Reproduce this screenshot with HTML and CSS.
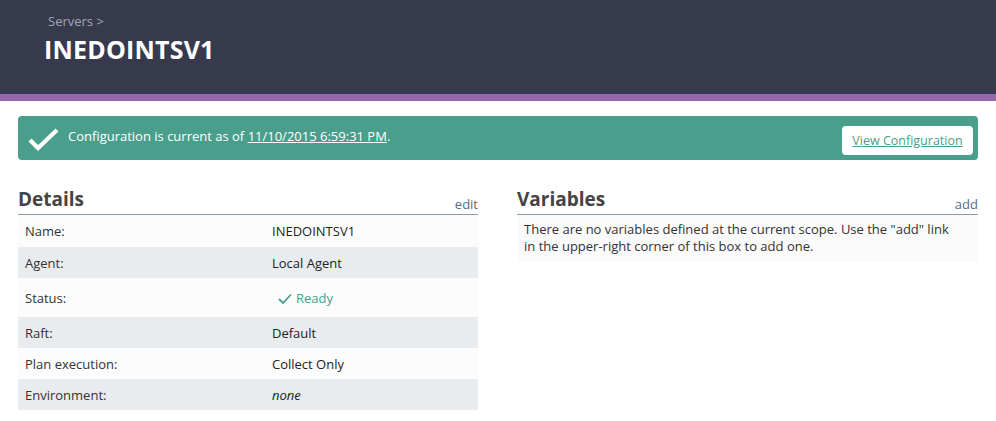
FILE: index.html
```html
<!DOCTYPE html>
<html>
<head>
<meta charset="utf-8">
<link rel="stylesheet" href="styles.css">
</head>
<body>
<header class="header">
  <div class="crumb">Servers &gt;</div>
  <h1 class="title">INEDOINTSV1</h1>
</header>
<div class="accent"></div>
<main class="main">
  <div class="banner">
    <svg class="check" width="32" height="24" viewBox="0 0 32 24"><path d="M2 13 L10 21 L29 3" fill="none" stroke="#fff" stroke-width="4.2"/></svg>
    <div class="banner-text">Configuration is current as of <a class="date" href="#">11/10/2015 6:59:31 PM</a>.</div>
    <a class="btn" href="#">View Configuration</a>
  </div>
  <div class="cols">
    <section class="col">
      <div class="col-head"><h2>Details</h2><a href="#" class="act">edit</a></div>
      <div class="rows">
        <div class="row"><span class="k">Name:</span><span class="v">INEDOINTSV1</span></div>
        <div class="row alt"><span class="k">Agent:</span><span class="v">Local Agent</span></div>
        <div class="row tall"><span class="k">Status:</span><span class="v ready"><svg width="14" height="11" viewBox="0 0 14 11"><path d="M1 6 L5 10 L13 1.5" fill="none" stroke="#4a9e8c" stroke-width="1.8"/></svg>Ready</span></div>
        <div class="row alt"><span class="k">Raft:</span><span class="v">Default</span></div>
        <div class="row"><span class="k">Plan execution:</span><span class="v">Collect Only</span></div>
        <div class="row alt"><span class="k">Environment:</span><span class="v"><em>none</em></span></div>
      </div>
    </section>
    <section class="col">
      <div class="col-head"><h2>Variables</h2><a href="#" class="act">add</a></div>
      <div class="empty">There are no variables defined at the current scope. Use the "add" link in the upper-right corner of this box to add one.</div>
    </section>
  </div>
</main>
</body>
</html>
```
FILE: styles.css
```css
* { box-sizing: border-box; }
body { margin: 0; font-family: "Open Sans", "Liberation Sans", sans-serif; background: #fff; color: #333; }
.header { background: #373a4d; height: 94px; padding: 13px 0 0 44px; }
.crumb { color: #a3a6b3; font-size: 13px; padding-left: 4px; line-height: 16px; }
.title { margin: 5px 0 0; color: #fff; font-size: 25px; font-weight: 700; line-height: 31px; letter-spacing: 0.2px; }
.accent { height: 7px; background: #9467ad; }
.main { padding: 15px 18px 0; }
.banner { display: flex; align-items: center; background: #4a9e8c; border-radius: 4px; height: 44px; padding: 0 5px 0 10px; }
.check { margin-right: 8px; margin-top: 2px; }
.banner-text { color: #fff; font-size: 13px; flex: 1; margin-top: -4px; }
.date { color: #fff; text-decoration: underline; }
.btn { background: #fff; color: #4a9e8c; font-size: 12.5px; border-radius: 4px; height: 29px; width: 131px; display: flex; align-items: center; justify-content: center; text-decoration: underline; margin-top: 10px; align-self: flex-start; }
.cols { display: flex; gap: 39px; margin-top: 26px; }
.col { flex: 0 0 460px; }
.col + .col { flex: 0 0 461px; }
.col-head { display: flex; justify-content: space-between; align-items: flex-end; border-bottom: 1px solid #8c9aa6; padding-bottom: 2px; }
.col-head h2 { margin: 0; font-size: 19px; font-weight: 700; color: #444; line-height: 26px; }
.act { color: #5c6b7a; font-size: 13px; text-decoration: none; line-height: 16px; }
.row { display: flex; align-items: center; height: 31px; background: #fcfcfc; font-size: 13px; padding-left: 7px; }
.row:first-child { height: 32px; }
.row.tall { height: 39px; }
.row.alt { background: #e8ecee; }
.k { width: 247px; color: #333; }
.v { color: #222; }
.ready { color: #4a9e8c; display: flex; align-items: center; gap: 4px; padding-left: 6px; margin-top: 1px; }
.empty { background: #fafafa; font-size: 13px; line-height: 17px; padding: 6px 22px 7px 7px; color: #333; }
```
